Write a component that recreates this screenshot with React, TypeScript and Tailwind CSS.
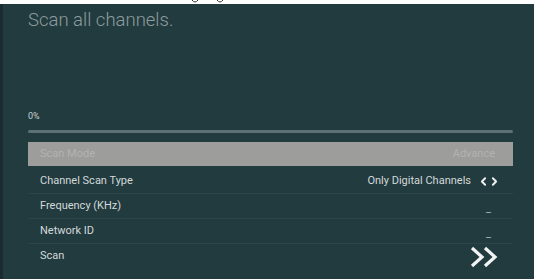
import { ChevronLeft, ChevronRight } from 'lucide-react'

const rows = [
  { label: 'Channel Scan Type', value: 'digital' },
  { label: 'Frequency (KHz)', value: 'dash' },
  { label: 'Network ID', value: 'dash' },
  { label: 'Scan', value: 'go' },
]

function DoubleChevron() {
  return (
    <svg width="32" height="22" viewBox="0 0 32 22" fill="none">
      <path d="M3 2 L13 11 L3 20" stroke="#f2f4f4" strokeWidth="3.2" strokeLinejoin="miter" />
      <path d="M16 2 L26 11 L16 20" stroke="#f2f4f4" strokeWidth="3.2" strokeLinejoin="miter" />
    </svg>
  )
}

export default function App() {
  return (
    <div
      className="flex h-[279px] w-[534px] flex-col overflow-hidden bg-white"
      style={{ fontFamily: 'Roboto, "Liberation Sans", sans-serif' }}
    >
      <div className="relative h-[4px] shrink-0 bg-white">
        <svg className="absolute left-[190px] top-0" width="40" height="4" viewBox="0 0 40 4">
          <path d="M2 0 Q5 4 8 0" stroke="#333" strokeWidth="1" fill="none" />
          <path d="M27 0 Q30 4 33 0" stroke="#333" strokeWidth="1" fill="none" />
        </svg>
      </div>
      <div className="flex flex-1 bg-[#1c3236]">
        <div className="w-[3px] shrink-0 bg-[#1a2c30]" />
        <div className="flex flex-1 flex-col bg-[#223b3f] pl-[25px] pr-[21px]">
          <div className="mt-[4px] text-[18.5px] font-light leading-[24px] text-[#8d9c9e]">
            Scan all channels.
          </div>
          <div className="mt-[78px] text-[9px] leading-[12px] text-[#c9d0d1]">0%</div>
          <div className="mt-[8px] h-[3px] rounded-full bg-[#5d7174]" />
          <div className="mt-[9px] mb-[3px] flex h-[24px] items-center justify-between bg-[#9d9d9c] pl-[12px] pr-[18px] text-[11px] text-[#b3b3b2]">
            <span>Scan Mode</span>
            <span>Advance</span>
          </div>
          {rows.map((row, i) => (
            <div
              key={row.label}
              className={`flex h-[25px] items-center justify-between pl-[12px] text-[11px] text-[#d3d9da] ${
                i < rows.length - 1 ? 'border-b border-[#2c4549]' : ''
              }`}
            >
              <span>{row.label}</span>
              {row.value === 'digital' && (
                <span className="flex items-center pr-[12px]">
                  <span className="mr-[6px]">Only Digital Channels</span>
                  <ChevronLeft size={13} strokeWidth={3.5} className="text-[#f0f2f2]" />
                  <ChevronRight size={13} strokeWidth={3.5} className="-ml-[2px] text-[#f0f2f2]" />
                </span>
              )}
              {row.value === 'dash' && (
                <span className="pr-[22px] pt-[6px] text-[#aab4b5]">_</span>
              )}
              {row.value === 'go' && (
                <span className="pr-[12px]">
                  <DoubleChevron />
                </span>
              )}
            </div>
          ))}
        </div>
      </div>
    </div>
  )
}
